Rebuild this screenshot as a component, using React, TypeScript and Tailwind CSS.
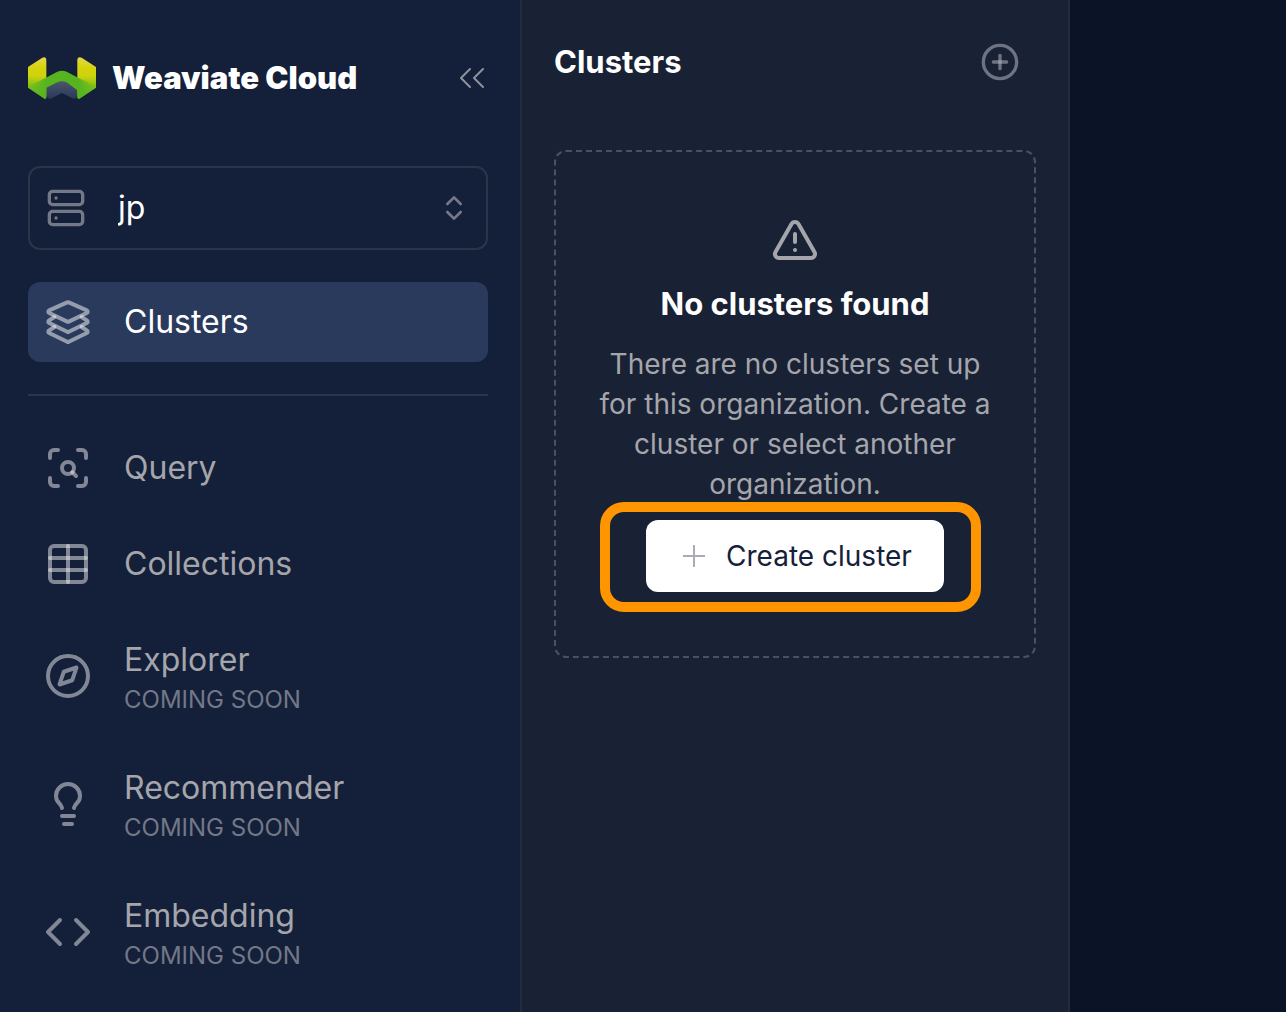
import type { ReactNode } from "react";
import {
  ChevronsUpDown,
  CirclePlus,
  Code,
  Lightbulb,
  ScanSearch,
  Server,
  TriangleAlert,
} from "lucide-react";

function Logo() {
  return (
    <svg viewBox="0 0 204 126" className="h-[42px] w-[68px] shrink-0" aria-hidden="true">
      <defs>
        <linearGradient id="wing" x1="0" y1="0" x2="0" y2="1">
          <stop offset="0" stopColor="#e6d84a" />
          <stop offset="0.25" stopColor="#d6d40c" />
          <stop offset="0.45" stopColor="#d0d20c" />
          <stop offset="0.7" stopColor="#7fbf1a" />
          <stop offset="1" stopColor="#58b520" />
        </linearGradient>
        <linearGradient id="arch" gradientUnits="userSpaceOnUse" x1="0" y1="0" x2="204" y2="0">
          <stop offset="0" stopColor="#56b51f" stopOpacity="0" />
          <stop offset="0.25" stopColor="#56b51f" />
          <stop offset="0.75" stopColor="#56b51f" />
          <stop offset="1" stopColor="#56b51f" stopOpacity="0" />
        </linearGradient>
        <linearGradient id="base" x1="0" y1="0" x2="0" y2="1">
          <stop offset="0" stopColor="#4f586c" />
          <stop offset="1" stopColor="#29375a" />
        </linearGradient>
      </defs>
      <path d="M54 84 L102 68 L150 84 V118 L138 126 L102 108 L66 126 L54 118Z" fill="url(#base)" />
      <path d="M0 30 L43 2 Q54 -2 55 8 V124 Q54 126 50 125 L0 92Z" fill="url(#wing)" />
      <path d="M204 30 L161 2 Q149 -2 148 8 V124 Q149 126 154 125 L204 92Z" fill="url(#wing)" />
      <path
        d="M0 88 L54 62 L88 44 Q102 39 116 44 L150 62 L204 88 V92 L154 125 Q147 126 148 100 L116 76 Q102 70 88 76 L55 92 Q56 126 50 125 L0 92Z"
        fill="url(#arch)"
      />
    </svg>
  );
}

function CollapseIcon() {
  return (
    <svg viewBox="0 0 24 20" fill="none" stroke="currentColor" strokeWidth="2" strokeLinecap="round" strokeLinejoin="round" className="h-5 w-6" aria-hidden="true">
      <path d="M10 1 1 10l9 9" />
      <path d="M23 1l-9 9 9 9" />
    </svg>
  );
}

function NavSvg({ children }: { children: ReactNode }) {
  return (
    <svg viewBox="0 0 24 24" fill="none" stroke="currentColor" strokeWidth="2" strokeLinecap="round" strokeLinejoin="round" className="size-12" aria-hidden="true">
      {children}
    </svg>
  );
}

function LayersIcon() {
  return (
    <NavSvg>
      <path d="M11.6 2.2a1 1 0 0 1 .8 0l9 4a.7.7 0 0 1 0 1.3l-9 4.3a1 1 0 0 1-.8 0l-9-4.3a.7.7 0 0 1 0-1.3z" />
      <path d="m5.2 9.5-2.6 1.7a.7.7 0 0 0 0 1.3l9 4.4a1 1 0 0 0 .8 0l9-4.4a.7.7 0 0 0 0-1.3l-2.6-1.7" />
      <path d="m5.2 14.5-2.6 1.7a.7.7 0 0 0 0 1.3l9 4.4a1 1 0 0 0 .8 0l9-4.4a.7.7 0 0 0 0-1.3l-2.6-1.7" />
    </NavSvg>
  );
}

function TableIcon() {
  return (
    <NavSvg>
      <rect x="3" y="3" width="18" height="18" rx="2" />
      <path d="M3 9h18" />
      <path d="M3 15h18" />
      <path d="M12 3v18" />
    </NavSvg>
  );
}

function CompassIcon() {
  return (
    <NavSvg>
      <circle cx="12" cy="12" r="10" />
      <path d="m16.24 7.76-2.12 6.36-6.36 2.12 2.12-6.36z" />
    </NavSvg>
  );
}

type NavItemProps = { icon: ReactNode; label: string; soon?: boolean; active?: boolean };

function NavItem({ icon, label, soon, active }: NavItemProps) {
  return (
    <a
      href="#"
      aria-current={active ? "page" : undefined}
      className={
        active
          ? "flex items-center gap-8 rounded-xl bg-[#293a5c] p-4 text-white"
          : "flex items-center gap-8 rounded-xl p-4 text-[#a5a6ab]"
      }
    >
      <span className={active ? "shrink-0 text-[#eeeef0]/55" : "shrink-0 text-[#eeeef0]/50"}>{icon}</span>
      <span className="flex flex-col">
        <span className="text-[32px] leading-[48px]">{label}</span>
        {soon && <span className="text-2xl leading-8 text-[#727887]">COMING SOON</span>}
      </span>
    </a>
  );
}

export default function App() {
  return (
    <div className="flex min-h-screen border-b border-[#0a1426] bg-[#0a1426] font-['Inter',sans-serif]">
      <aside className="w-[522px] shrink-0 border-r-2 border-[#242b3d] bg-[#14203a] pt-[54px] pr-8 pb-6 pl-7">
        <header className="flex items-center gap-4">
          <Logo />
          <span className="text-[31px] leading-[48px] font-black text-white">Weaviate Cloud</span>
          <button type="button" aria-label="Collapse sidebar" className="mr-1 ml-auto text-[#8d919b]">
            <CollapseIcon />
          </button>
        </header>

        <div className="relative mt-16 text-[#747987]">
          <select
            aria-label="Organization"
            className="block h-[84px] w-full appearance-none rounded-xl border-2 border-[#2c3447] bg-transparent pr-16 pl-[88px] text-[32px] text-white"
          >
            <option>jp</option>
          </select>
          <Server className="pointer-events-none absolute inset-y-0 left-[18px] my-auto size-10" />
          <ChevronsUpDown className="pointer-events-none absolute inset-y-0 right-[18px] my-auto size-8" />
        </div>

        <nav className="mt-8">
          <NavItem icon={<LayersIcon />} label="Clusters" active />
          <hr className="my-8 border-t-2 border-[#2c3447]" />
          <div className="flex flex-col gap-4">
            <NavItem icon={<ScanSearch className="size-12" />} label="Query" />
            <NavItem icon={<TableIcon />} label="Collections" />
            <NavItem icon={<CompassIcon />} label="Explorer" soon />
            <NavItem icon={<Lightbulb className="size-12" />} label="Recommender" soon />
            <NavItem icon={<Code className="size-12" />} label="Embedding" soon />
          </div>
        </nav>
      </aside>

      <main className="w-[548px] shrink-0 border-r-2 border-[#242b3d] bg-[#192135] px-8 pt-[38px]">
        <header className="flex items-center justify-between pr-4">
          <h1 className="text-[31px] leading-[48px] font-bold text-white">Clusters</h1>
          <button type="button" aria-label="Add cluster" className="text-[#b4b8c4]/55">
            <CirclePlus className="size-10" />
          </button>
        </header>

        <section className="mt-16 flex flex-col items-center rounded-xl border-2 border-dashed border-[#4b5160] px-10 py-16 text-center">
          <TriangleAlert className="size-12 text-[#a5a6ab]" />
          <h2 className="mt-4 text-[31px] leading-[48px] font-bold text-white">No clusters found</h2>
          <p className="mt-4 text-[28px] leading-10 text-[#a5a6ab]">
            There are no clusters set up for this organization. Create a cluster or select another organization.
          </p>
          <div className="relative mt-4">
            <button type="button" className="flex h-[72px] items-center gap-5 rounded-xl bg-white pr-8 pl-9 text-[28px] text-[#15203a]">
              <svg viewBox="0 0 24 24" fill="none" stroke="#a9abb8" strokeWidth="2" className="size-6" aria-hidden="true">
                <path d="M12 1v22M1 12h22" />
              </svg>
              Create cluster
            </button>
            <div className="pointer-events-none absolute -top-[18px] -right-[37px] -bottom-5 -left-[46px] rounded-3xl border-10 border-[#ff9500]" />
          </div>
        </section>
      </main>
    </div>
  );
}
